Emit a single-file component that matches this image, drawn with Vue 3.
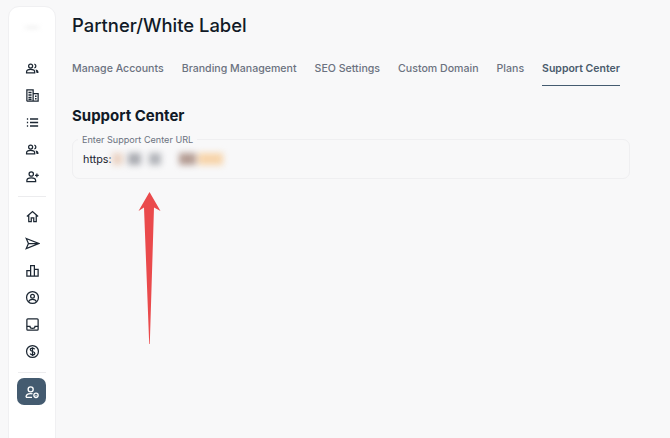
<script setup>
const tabs = ['Manage Accounts', 'Branding Management', 'SEO Settings', 'Custom Domain', 'Plans', 'Support Center']
const activeTab = 'Support Center'
const blurs = [
  { w: 11, c: '#ebd3c4', m: 0 }, { w: 13, c: '#a9abb1', m: 5 }, { w: 12, c: '#b2b4b9', m: 8 },
  { w: 17, c: '#b49c93', m: 18 }, { w: 25, c: '#f7d4aa', m: 2 },
]
</script>

<template>
  <div class="page">
    <aside class="sidebar">
      <div class="logo"></div>
      <div class="nav-group">
        <a class="nav-item"><svg viewBox="0 0 24 24"><circle cx="9" cy="8" r="3.200"/><path d="M2.500 19v-1.500c0-2.400 3-4 6.500-4s6.500 1.600 6.500 4V19z"/><path d="M15 5a3.200 3.200 0 0 1 0 6.200"/><path class="solid" d="M17 13.500c2.500.5 4.500 1.800 4.500 4V19h-3z"/></svg></a>
        <a class="nav-item"><svg viewBox="0 0 24 24"><path d="M3 21V3h10v18M13 9h8v12H3"/><path class="thick" d="M5.500 7h5M5.500 11h5M5.500 15h5M5.500 18.500h5M16 13h2.500M16 17h2.500"/></svg></a>
        <a class="nav-item"><svg viewBox="0 0 24 24"><path class="thick" d="M8 6.500h13M8 12h13M8 17.500h13M3 6.500h2M3 12h2M3 17.500h2"/></svg></a>
        <a class="nav-item"><svg viewBox="0 0 24 24"><circle cx="9" cy="8" r="3.200"/><path d="M2.500 19v-1.500c0-2.400 3-4 6.500-4s6.500 1.600 6.500 4V19z"/><path d="M15 5a3.200 3.200 0 0 1 0 6.200"/><path class="solid" d="M17 13.500c2.500.5 4.500 1.800 4.500 4V19h-3z"/></svg></a>
        <a class="nav-item"><svg viewBox="0 0 24 24"><circle cx="10" cy="8" r="3.500"/><path d="M3 20v-1.500c0-2.500 3.200-4.200 7-4.200s7 1.700 7 4.200V20z"/><path d="M19 7v6M16 10h6"/></svg></a>
      </div>
      <div class="divider first"></div>
      <div class="nav-group">
        <a class="nav-item"><svg viewBox="0 0 24 24"><path d="M3 12 12 4l9 8M6 10v10h4v-6h4v6h4V10"/></svg></a>
        <a class="nav-item"><svg viewBox="0 0 24 24"><path d="M2 4l20 8-20 8 3.500-8zM5.500 12H22"/></svg></a>
        <a class="nav-item"><svg viewBox="0 0 24 24"><path d="M3 21V12h6V4h6v6h6v11zM9 12v9M15 10v11"/></svg></a>
        <a class="nav-item"><svg viewBox="0 0 24 24"><circle cx="12" cy="12" r="9.500"/><circle cx="12" cy="10" r="3"/><path d="M5.500 18.500c1.500-2.500 4-3.500 6.500-3.500s5 1 6.500 3.500"/></svg></a>
        <a class="nav-item"><svg viewBox="0 0 24 24"><rect x="3" y="3" width="18" height="18" rx="1.500"/><path d="M3 15h5c0 2 1.800 3 4 3s4-1 4-3h5"/></svg></a>
        <a class="nav-item"><svg viewBox="0 0 24 24"><circle cx="12" cy="12" r="9.500"/><path d="M15.500 8.500c-.5-1.200-2-1.800-3.500-1.800-2 0-3.500 1-3.500 2.600 0 3.500 7.200 1.900 7.200 5.300 0 1.600-1.600 2.700-3.700 2.700-1.700 0-3.200-.7-3.700-2M12 5v14"/></svg></a>
      </div>
      <div class="divider second"></div>
      <a class="nav-active"><svg viewBox="0 0 24 24"><circle cx="10" cy="8" r="3.800"/><path d="M3 20c0-3.500 3-5.500 7-5.500 1 0 2 .1 2.800.4M3 20h9"/><circle cx="18" cy="17" r="3.200"/><circle class="dot" cx="18" cy="17" r="1"/></svg></a>
    </aside>

    <main class="content">
      <h1 class="title">Partner/White Label</h1>
      <nav class="tabs">
        <a v-for="tab in tabs" :key="tab" class="tab" :class="{ active: tab === activeTab }">{{ tab }}</a>
      </nav>
      <h2 class="section-title">Support Center</h2>
      <div class="field">
        <span class="field-label">Enter Support Center URL</span>
        <div class="field-value">
          <span>https:</span>
          <span class="blurred">
            <i v-for="(b, i) in blurs" :key="i" :style="{ width: b.w + 'px', marginLeft: b.m + 'px', background: b.c }"></i>
          </span>
        </div>
      </div>
    </main>

    <svg class="arrow" viewBox="0 0 23 152"><path d="M11.500 0 22.500 19 16 15.500 11.800 152 11.200 152 6 15.500 0.500 19Z"/></svg>
  </div>
</template>

<style>
html, body {
  margin: 0;
  background: #f8f8f9;
  overflow: hidden;
}
</style>

<style scoped>
.page {
  position: relative;
  display: flex;
  width: 670px;
  height: 438px;
  overflow: hidden;
  background: #f8f8f9;
  font-family: Inter, "Liberation Sans", sans-serif;
}
.sidebar {
  width: 48px;
  height: 440px;
  margin: 6px 0 0 8px;
  padding-top: 48px;
  box-sizing: border-box;
  display: flex;
  flex-direction: column;
  align-items: center;
  flex-shrink: 0;
  background: #fff;
  border: 1px solid #f0f0f2;
  border-radius: 11px 11px 0 0;
}
.logo {
  position: absolute;
  top: 26px;
  left: 25px;
  width: 14px;
  height: 3px;
  background: #f1f1f1;
  filter: blur(2px);
}
.nav-group {
  display: flex;
  flex-direction: column;
}
.nav-item {
  width: 27px;
  height: 27px;
  display: flex;
  align-items: center;
  justify-content: center;
}
.nav-item svg {
  width: 15px;
  height: 15px;
  fill: none;
  stroke: #1c2733;
  stroke-width: 2;
}
.nav-item svg .thick {
  stroke-width: 2.400;
}
.nav-item svg .solid {
  fill: #1c2733;
  stroke: none;
}
.divider {
  width: 28px;
  height: 1px;
  background: #ececee;
}
.divider.first {
  margin: 6px 0 6px;
}
.divider.second {
  margin: 7px 0 5px;
}
.nav-active {
  width: 29px;
  height: 27px;
  margin-left: -1px;
  border-radius: 7px;
  display: flex;
  align-items: center;
  justify-content: center;
  background: #445b70;
}
.nav-active svg {
  width: 16px;
  height: 16px;
  fill: none;
  stroke: #fff;
  stroke-width: 2;
}
.nav-active .dot {
  fill: #fff;
  stroke: none;
}
.content {
  flex: 1;
  padding: 13px 40px 0 16px;
  min-width: 0;
}
.title {
  margin: 0;
  font-size: 18.400px;
  line-height: 24px;
  font-weight: 500;
  color: #111a27;
}
.tabs {
  display: flex;
  gap: 18px;
  margin-top: 14px;
}
.tab {
  padding: 10px 0 8px;
  font-size: 10.600px;
  line-height: 16px;
  font-weight: 500;
  color: #6b7280;
  white-space: nowrap;
  border-bottom: 1.500px solid transparent;
}
.tab.active {
  color: #4a5b6c;
  font-size: 10.500px;
  border-bottom-color: #445b70;
  font-weight: 600;
}
.section-title {
  margin: 20px 0 0;
  font-size: 15px;
  line-height: 20px;
  font-weight: 700;
  color: #111a27;
}
.field {
  position: relative;
  width: 558px;
  height: 40px;
  margin-top: 13px;
  box-sizing: border-box;
  padding: 0 10px;
  display: flex;
  align-items: center;
  border: 1px solid #efeff1;
  border-radius: 7px;
}
.field-label {
  position: absolute;
  top: -6px;
  left: 5px;
  padding: 0 4px;
  font-size: 9.100px;
  line-height: 12px;
  color: #6b7280;
  background: #f8f8f9;
}
.field-value {
  display: flex;
  align-items: center;
  font-size: 10.800px;
  color: #1b2431;
}
.blurred {
  display: flex;
  filter: blur(3px);
}
.blurred i {
  display: block;
  height: 12px;
}
.arrow {
  position: absolute;
  left: 138px;
  top: 192px;
  width: 23px;
  height: 152px;
  fill: #ea4a4c;
}
</style>
